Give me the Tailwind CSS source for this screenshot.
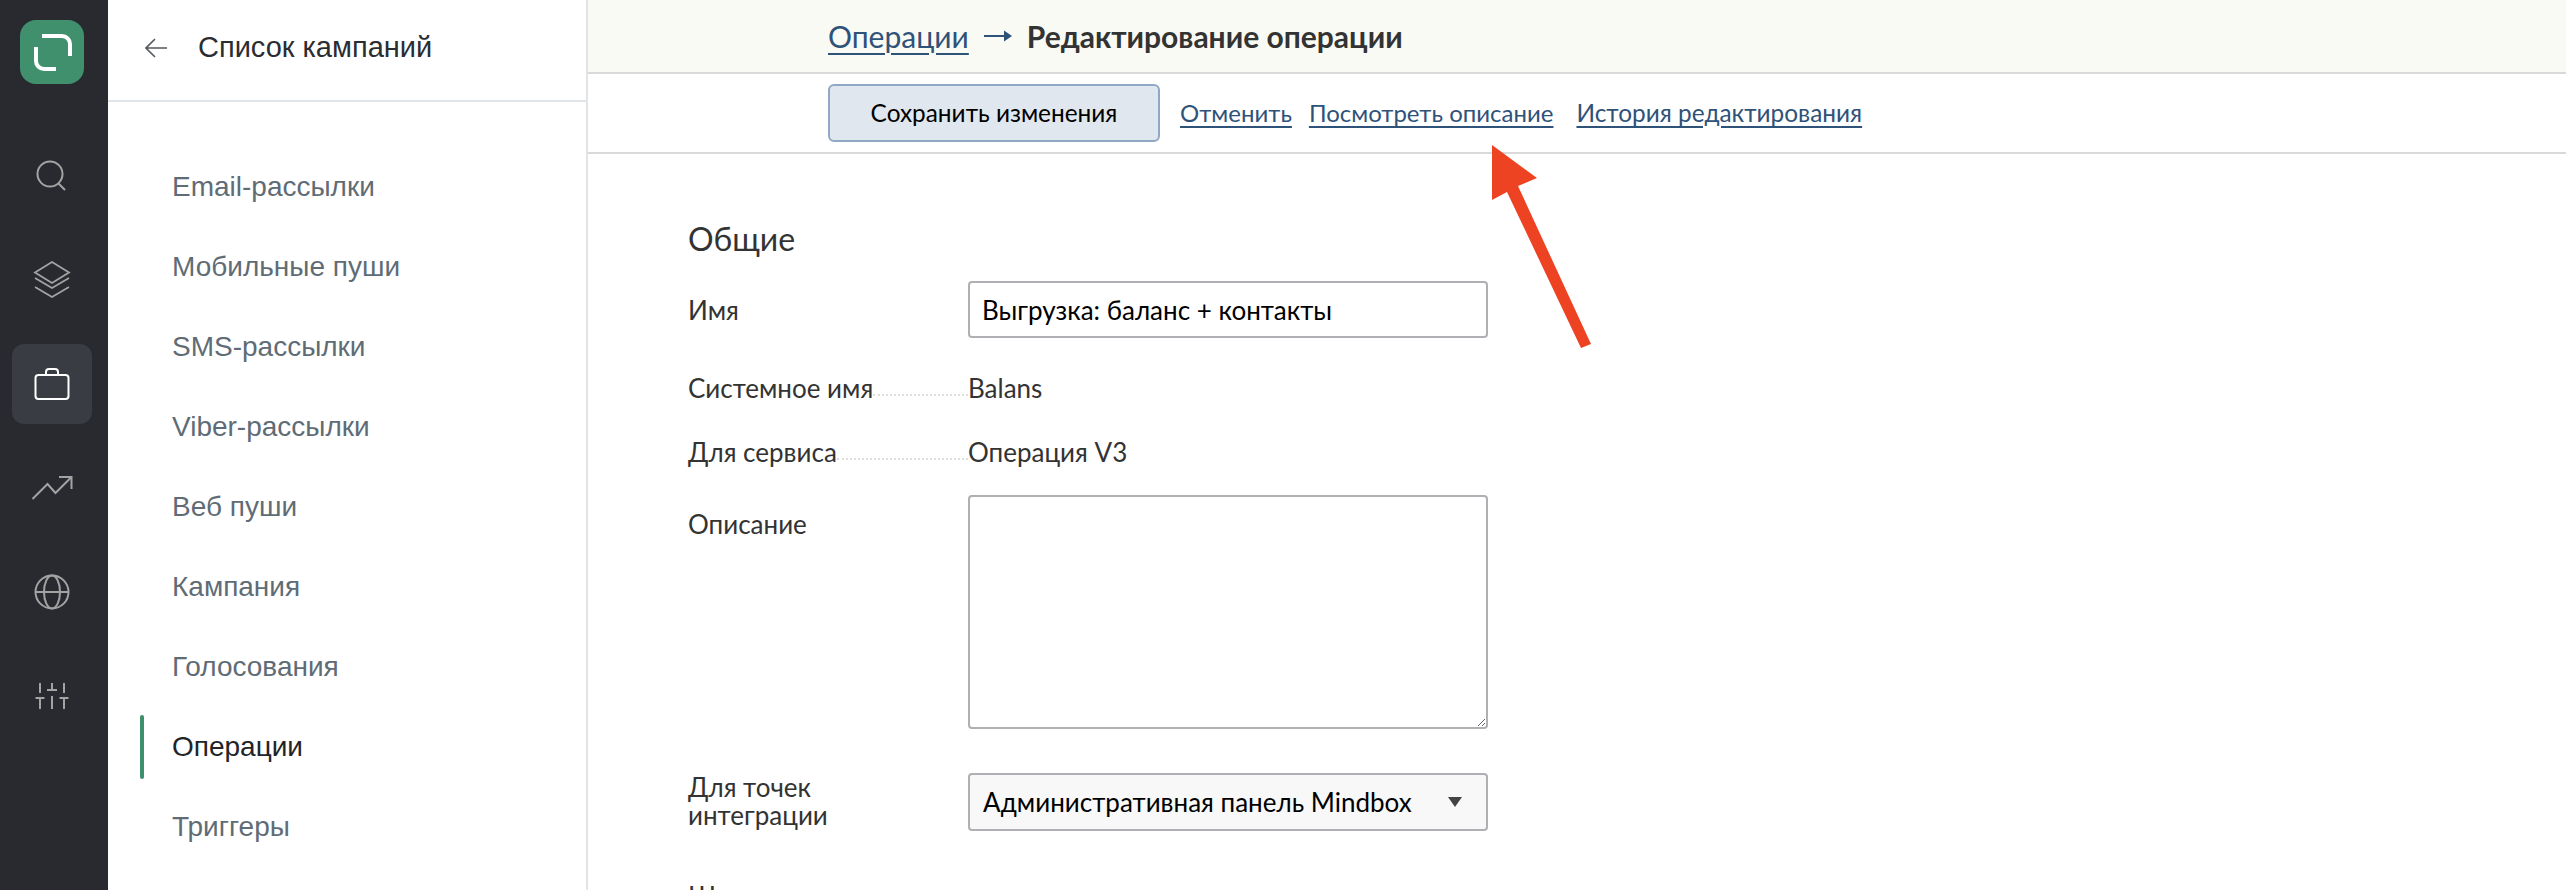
<!DOCTYPE html>
<html lang="ru"><head><meta charset="utf-8"><script src="https://cdn.jsdelivr.net/npm/@tailwindcss/browser@4"></script></head>
<body class="bg-white">
<div class="relative flex h-[890px] w-[2566px] overflow-hidden font-['Lato','Open_Sans',sans-serif]">
  <aside class="flex w-[108px] shrink-0 flex-col items-center bg-[#282a30] pt-5 pr-1">
    <div class="flex h-16 w-16 items-center justify-center rounded-2xl bg-[#41906d]">
      <svg width="64" height="64" viewBox="0 0 64 64" fill="none" stroke="#fff" stroke-width="4"><path d="M22 16h20a8 8 0 0 1 8 8v12"/><path d="M16 27v14a8 8 0 0 0 8 8h12"/></svg>
    </div>
    <div class="mt-[52px] flex flex-col gap-6">
      <div class="flex h-20 w-20 items-center justify-center"><svg width="40" height="40" viewBox="0 0 40 40" fill="none" stroke="#a3a3a3" stroke-width="2"><circle cx="18" cy="18" r="12.500"/><path d="M26 27l7 7"/></svg></div>
      <div class="flex h-20 w-20 items-center justify-center"><svg width="40" height="40" viewBox="0 0 40 40" fill="none" stroke="#a3a3a3" stroke-width="1.800"><path d="M20 2l17 10.500L20 23 3 12.500z"/><path d="M3 18l17 10 17-10"/><path d="M3 27l17 10 17-10"/></svg></div>
      <div class="flex h-20 w-20 items-center justify-center rounded-xl bg-[#393c42]"><svg width="40" height="40" viewBox="0 0 40 40" fill="none" stroke="#fff" stroke-width="2"><rect x="3.500" y="11" width="33" height="24" rx="3"/><path d="M14 11V8a3 3 0 0 1 3-3h6a3 3 0 0 1 3 3v3"/></svg></div>
      <div class="flex h-20 w-20 items-center justify-center"><svg width="44" height="40" viewBox="0 0 44 40" fill="none" stroke="#a3a3a3" stroke-width="2"><path d="M2.500 31l15-15 8 9L41 9.500"/><path d="M29 9h12.500v12"/></svg></div>
      <div class="flex h-20 w-20 items-center justify-center"><svg width="40" height="40" viewBox="0 0 40 40" fill="none" stroke="#a3a3a3" stroke-width="2"><circle cx="20" cy="20" r="16.500"/><ellipse cx="20" cy="20" rx="8" ry="16.500"/><path d="M3.500 20h33"/></svg></div>
      <div class="flex h-20 w-20 items-center justify-center"><svg width="40" height="40" viewBox="0 0 40 40" fill="none" stroke="#a3a3a3" stroke-width="2"><path d="M8 7v10M3.500 22h9M8 22v11M20 7v8M15 14h10M20 20v13M32 7v10M27.500 22h9M32 22v11"/></svg></div>
    </div>
  </aside>

  <nav class="flex w-[480px] shrink-0 flex-col border-r-2 border-[#dfe5e8] font-['Liberation_Sans',sans-serif]">
    <div class="flex h-[102px] items-center gap-[31px] border-b-2 border-[#dfe5e8] pb-1 pl-[37px] text-[29px] text-[#2b2d31]">
      <svg width="22" height="20" viewBox="0 0 22 20" fill="none" stroke="#55595e" stroke-width="1.600"><path d="M22 10H1.500M10 1l-9 9 9 9"/></svg>
      <span>Список кампаний</span>
    </div>
    <ul class="flex flex-col pt-[45px] text-[28px] text-[#5f6c75]">
      <li class="flex h-20 items-center pl-[64px]">Email-рассылки</li>
      <li class="flex h-20 items-center pl-[64px]">Мобильные пуши</li>
      <li class="flex h-20 items-center pl-[64px]">SMS-рассылки</li>
      <li class="flex h-20 items-center pl-[64px]">Viber-рассылки</li>
      <li class="flex h-20 items-center pl-[64px]">Веб пуши</li>
      <li class="flex h-20 items-center pl-[64px]">Кампания</li>
      <li class="flex h-20 items-center pl-[64px]">Голосования</li>
      <li class="relative flex h-20 items-center pl-[64px] text-[#222428]"><span class="absolute top-2 left-8 h-16 w-1 rounded-sm bg-[#3e8f6c]"></span>Операции</li>
      <li class="flex h-20 items-center pl-[64px]">Триггеры</li>
    </ul>
  </nav>

  <main class="flex min-w-0 flex-1 flex-col">
    <header class="flex h-[74px] shrink-0 items-center gap-[15px] border-b-2 border-[#d9d9d9] bg-[#fafaf5] pl-[240px] text-[30px] text-[#333]">
      <a class="text-[#2f5279] underline decoration-2 underline-offset-[5px]">Операции</a>
      <svg width="28" height="14" viewBox="0 0 28 14" fill="#2f5279"><path d="M0 6h20V1.500L28 7l-8 5.500V8H0z"/></svg>
      <h1 class="font-bold">Редактирование операции</h1>
    </header>
    <div class="flex h-20 shrink-0 items-center border-b-2 border-[#d9d9d9] pl-[240px] text-[24px] text-[#2f5279]">
      <button class="h-[58px] w-[332px] rounded-md border-2 border-[#8fa9c4] bg-[#e1e7ef] text-[24.400px] text-black">Сохранить изменения</button>
      <a class="ml-5 underline decoration-2 underline-offset-4">Отменить</a>
      <a class="ml-[17px] underline decoration-2 underline-offset-4">Посмотреть описание</a>
      <a class="ml-[23px] text-[24.400px] underline decoration-2 underline-offset-4">История редактирования</a>
    </div>
    <form class="pt-[65px] pl-[100px] text-[26px] leading-7 text-[#333]">
      <h2 class="text-[32px] leading-10">Общие</h2>
      <div class="mt-[22px] grid grid-cols-[280px_520px] items-center">
        <label>Имя</label>
        <div class="flex h-[57px] items-center rounded border-2 border-[#b0b0b4] pl-3 text-black">Выгрузка: баланс + контакты</div>
      </div>
      <div class="mt-[36px] grid grid-cols-[280px_520px] items-baseline">
        <div class="flex"><label>Системное имя</label><span class="mb-[6px] flex-1 border-b-2 border-dotted border-[#dddddd]"></span></div>
        <span>Balans</span>
      </div>
      <div class="mt-[36px] grid grid-cols-[280px_520px] items-baseline">
        <div class="flex"><label>Для сервиса</label><span class="mb-[6px] flex-1 border-b-2 border-dotted border-[#dddddd]"></span></div>
        <span>Операция V3</span>
      </div>
      <div class="mt-[29px] grid grid-cols-[280px_520px]">
        <label class="pt-[15px]">Описание</label>
        <textarea class="block h-[234px] rounded border-2 border-[#b0b0b4]"></textarea>
      </div>
      <div class="mt-11 grid grid-cols-[280px_520px] items-center">
        <label class="pb-[2px]">Для точек<br>интеграции</label>
        <div class="flex h-[58px] items-center justify-between rounded border-2 border-[#b0b0b4] bg-[#f8f8f8] pr-6 pl-[13px] text-black">Административная панель Mindbox
          <svg width="14" height="10" viewBox="0 0 14 10" fill="#444"><path d="M0 0h14L7 10z"/></svg>
        </div>
      </div>
      <label class="mt-[51px] block">Ш</label>
    </form>
  </main>

  <svg class="absolute top-[140px] left-[1485px]" width="115" height="215" viewBox="0 0 115 215" fill="#ee4323"><path d="M7 5L52 38 33 46 106 204 96 208 22 52 7 60z"/></svg>
</div>
</body></html>
